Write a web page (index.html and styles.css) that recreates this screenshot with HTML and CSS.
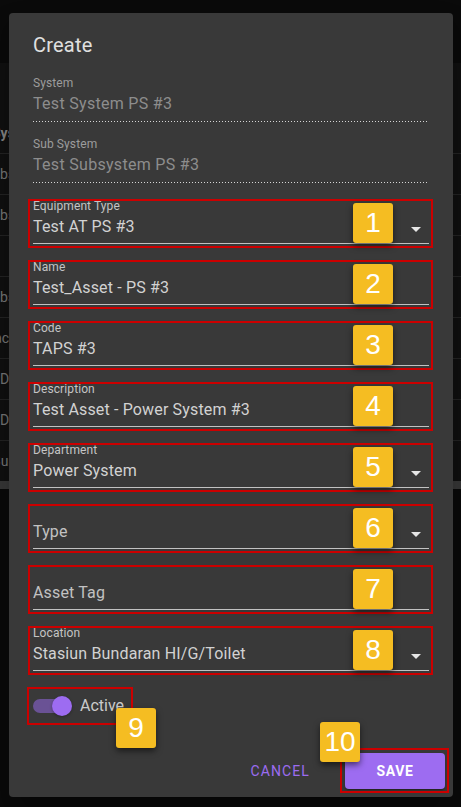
FILE: index.html
```html
<!DOCTYPE html>
<html lang="en">
<head>
<meta charset="utf-8">
<title>Create</title>
<link rel="stylesheet" href="styles.css">
</head>
<body>
<div class="page">
  <div class="bg">
    <div class="bg-top"></div>
    <div class="bg-table">
      <div class="bg-row head"><span class="cell i-ys">Systems</span></div>
      <div class="bg-row"><span class="cell i-bs">Subsystem</span></div>
      <div class="bg-row"><span class="cell i-bs">Subsystem</span></div>
      <div class="bg-row"><span class="cell"></span></div>
      <div class="bg-row"><span class="cell i-bs">Subsystem</span></div>
      <div class="bg-row"><span class="cell i-ce">Place</span></div>
      <div class="bg-row"><span class="cell i-di">Distribution</span></div>
      <div class="bg-row"><span class="cell i-di">Distribution</span></div>
      <div class="bg-row last"><span class="cell i-ar">Bundaran</span></div>
    </div>
    <div class="bg-scroll"></div>
  </div>

  <div class="dialog">
    <h2 class="title">Create</h2>
    <div class="form">
      <div class="field disabled">
        <div class="label">System</div>
        <div class="control"><span class="value">Test System PS #3</span></div>
      </div>
      <div class="field disabled">
        <div class="label">Sub System</div>
        <div class="control"><span class="value">Test Subsystem PS #3</span></div>
      </div>
      <div class="field">
        <div class="label">Equipment Type</div>
        <div class="control"><span class="value">Test AT PS #3</span><svg class="caret" viewBox="7 10 10 5"><path d="M7 10L12 15L17 10Z"/></svg></div>
        <span class="annot"></span><span class="badge">1</span>
      </div>
      <div class="field">
        <div class="label">Name</div>
        <div class="control"><span class="value">Test_Asset - PS #3</span></div>
        <span class="annot"></span><span class="badge">2</span>
      </div>
      <div class="field">
        <div class="label">Code</div>
        <div class="control"><span class="value">TAPS #3</span></div>
        <span class="annot"></span><span class="badge">3</span>
      </div>
      <div class="field">
        <div class="label">Description</div>
        <div class="control"><span class="value">Test Asset - Power System #3</span></div>
        <span class="annot"></span><span class="badge">4</span>
      </div>
      <div class="field">
        <div class="label">Department</div>
        <div class="control"><span class="value">Power System</span><svg class="caret" viewBox="7 10 10 5"><path d="M7 10L12 15L17 10Z"/></svg></div>
        <span class="annot"></span><span class="badge">5</span>
      </div>
      <div class="field">
        <div class="label"></div>
        <div class="control"><span class="value placeholder">Type</span><svg class="caret" viewBox="7 10 10 5"><path d="M7 10L12 15L17 10Z"/></svg></div>
        <span class="annot"></span><span class="badge">6</span>
      </div>
      <div class="field">
        <div class="label"></div>
        <div class="control"><span class="value placeholder">Asset Tag</span></div>
        <span class="annot"></span><span class="badge">7</span>
      </div>
      <div class="field">
        <div class="label">Location</div>
        <div class="control"><span class="value">Stasiun Bundaran HI/G/Toilet</span><svg class="caret" viewBox="7 10 10 5"><path d="M7 10L12 15L17 10Z"/></svg></div>
        <span class="annot"></span><span class="badge">8</span>
      </div>
      <div class="switch-row">
        <span class="switch"><span class="track"></span><span class="thumb"></span></span>
        <span class="switch-label">Active</span>
        <span class="annot annot-switch"></span><span class="badge badge-switch">9</span>
      </div>
    </div>
    <div class="actions">
      <button class="btn btn-text">Cancel</button>
      <span class="save-wrap">
        <button class="btn btn-save">Save</button>
        <span class="annot annot-save"></span><span class="badge badge-save">10</span>
      </span>
    </div>
  </div>
</div>
</body>
</html>
```

FILE: styles.css
```css
* { box-sizing: border-box; }

html, body {
  margin: 0;
  padding: 0;
  background: #0b0b0b;
}

body {
  font-family: Roboto, "Liberation Sans", Arial, sans-serif;
  width: 461px;
  height: 807px;
  overflow: hidden;
}

.page {
  position: relative;
  width: 461px;
  height: 807px;
}

/* ---------- background (dimmed page behind the dialog) ---------- */
.bg {
  display: flex;
  flex-direction: column;
}

.bg-top {
  height: 63px;
  background: #0b0b0b;
}

.bg-table {
  display: flex;
  flex-direction: column;
  background: #121212;
}

.bg-row {
  height: 41px;
  border-bottom: 1px solid #262626;
  display: flex;
  align-items: center;
  overflow: hidden;
}

.bg-row.head {
  height: 91px;
  align-items: flex-end;
  padding-bottom: 12px;
}

.bg-row.last {
  height: 40px;
  border-bottom: none;
}

.cell {
  font-size: 14px;
  color: #7b7b7b;
  white-space: nowrap;
}

.head .cell {
  font-weight: 700;
  color: #8a8a8a;
}

.i-ys { text-indent: -8px; }
.i-bs { text-indent: -16px; }
.i-ce { text-indent: -18px; }
.i-di { text-indent: 0; }
.i-ar { text-indent: -8px; }

.bg-scroll {
  height: 8px;
  background: #3a3a3a;
}

/* ---------- dialog ---------- */
.dialog {
  position: absolute;
  left: 9px;
  top: 13px;
  width: 444px;
  height: 784px;
  background: #393939;
  border-radius: 4px;
  box-shadow: 0 11px 15px -7px rgba(0,0,0,.2), 0 24px 38px 3px rgba(0,0,0,.14), 0 9px 46px 8px rgba(0,0,0,.12);
  display: flex;
  flex-direction: column;
}

.title {
  margin: 0;
  padding: 16px 24px 0;
  font-size: 20px;
  line-height: 32px;
  font-weight: 400;
  color: #e0e0e0;
  letter-spacing: 0.2px;
}

.form {
  padding: 0 24px;
  display: flex;
  flex-direction: column;
}

.field {
  position: relative;
  display: flex;
  flex-direction: column;
  padding-top: 16px;
}

.label {
  font-size: 12px;
  line-height: 15px;
  height: 15px;
  color: #c4c4c4;
  white-space: nowrap;
  letter-spacing: 0.1px;
}

.control {
  display: flex;
  align-items: flex-start;
  height: 30px;
  padding-bottom: 4px;
  border-bottom: 1px solid #c2c2c2;
}

.value {
  flex: 1;
  font-size: 16px;
  line-height: 25px;
  color: #d2d2d2;
  white-space: nowrap;
  letter-spacing: 0.15px;
}

.value.placeholder {
  color: #c2c2c2;
}

.caret {
  width: 10px;
  height: 5px;
  margin-top: 13px;
  margin-right: 8px;
  fill: #e6e6e6;
}

.field.disabled {
  padding-top: 14px;
}

.field.disabled .label {
  line-height: 16px;
  height: 16px;
  color: #9c9c9c;
}

.field.disabled .control {
  height: 31px;
  padding-bottom: 5px;
  border-bottom: none;
  background: repeating-linear-gradient(90deg, #d6d6d6 0 1px, transparent 1px 3px) left bottom / 100% 1px no-repeat;
}

.field.disabled .value {
  line-height: 26px;
  color: #8d8d8d;
  letter-spacing: 0.3px;
}

/* ---------- annotations ---------- */
.annot {
  position: absolute;
  left: -5px;
  right: -4px;
  top: 16px;
  bottom: -4px;
  border: 2px solid #cc0000;
  pointer-events: none;
}

.badge {
  position: absolute;
  left: 320px;
  top: 20px;
  width: 40px;
  height: 40px;
  border-radius: 3px;
  background: #f5bd22;
  color: #ffffff;
  font-family: "Liberation Sans", Arial, sans-serif;
  font-size: 28px;
  line-height: 40px;
  text-align: center;
  box-shadow: 0 3px 6px rgba(0,0,0,.55);
}

/* ---------- switch ---------- */
.switch-row {
  position: relative;
  margin-top: 23px;
  height: 24px;
  display: flex;
  align-items: center;
  gap: 8px;
}

.switch {
  position: relative;
  width: 39px;
  height: 20px;
}

.track {
  position: absolute;
  left: 0;
  top: 3px;
  width: 36px;
  height: 14px;
  border-radius: 7px;
  background: #6a5295;
}

.thumb {
  position: absolute;
  left: 19px;
  top: 0;
  width: 20px;
  height: 20px;
  border-radius: 50%;
  background: #9d6cf1;
  box-shadow: 0 1px 3px rgba(0,0,0,.3);
}

.switch-label {
  font-size: 16px;
  line-height: 24px;
  color: #cbcbcb;
}

.annot-switch {
  left: -6px;
  right: auto;
  top: -7px;
  bottom: auto;
  width: 106px;
  height: 38px;
}

.badge-switch {
  left: 83px;
  top: 14px;
}

/* ---------- actions ---------- */
.actions {
  margin-top: auto;
  padding: 8px;
  display: flex;
  justify-content: flex-end;
  align-items: center;
}

.btn {
  height: 36px;
  border: none;
  border-radius: 4px;
  font-family: Roboto, "Liberation Sans", Arial, sans-serif;
  font-size: 14px;
  font-weight: 400;
  letter-spacing: 1.1px;
  text-transform: uppercase;
  padding: 0 16px;
  cursor: pointer;
}

.btn-text {
  background: transparent;
  color: #9c6cf0;
  margin-right: 19px;
}

.save-wrap {
  position: relative;
  display: flex;
}

.btn-save {
  width: 100px;
  background: #9d6cf1;
  color: #ffffff;
  font-weight: 700;
  letter-spacing: 0.6px;
  box-shadow: 0 3px 1px -2px rgba(0,0,0,.2), 0 2px 2px 0 rgba(0,0,0,.14), 0 1px 5px 0 rgba(0,0,0,.12);
}

.annot-save {
  left: -5px;
  right: -4px;
  top: -5px;
  bottom: -4px;
}

.badge-save {
  left: -25px;
  top: -31px;
}
```
